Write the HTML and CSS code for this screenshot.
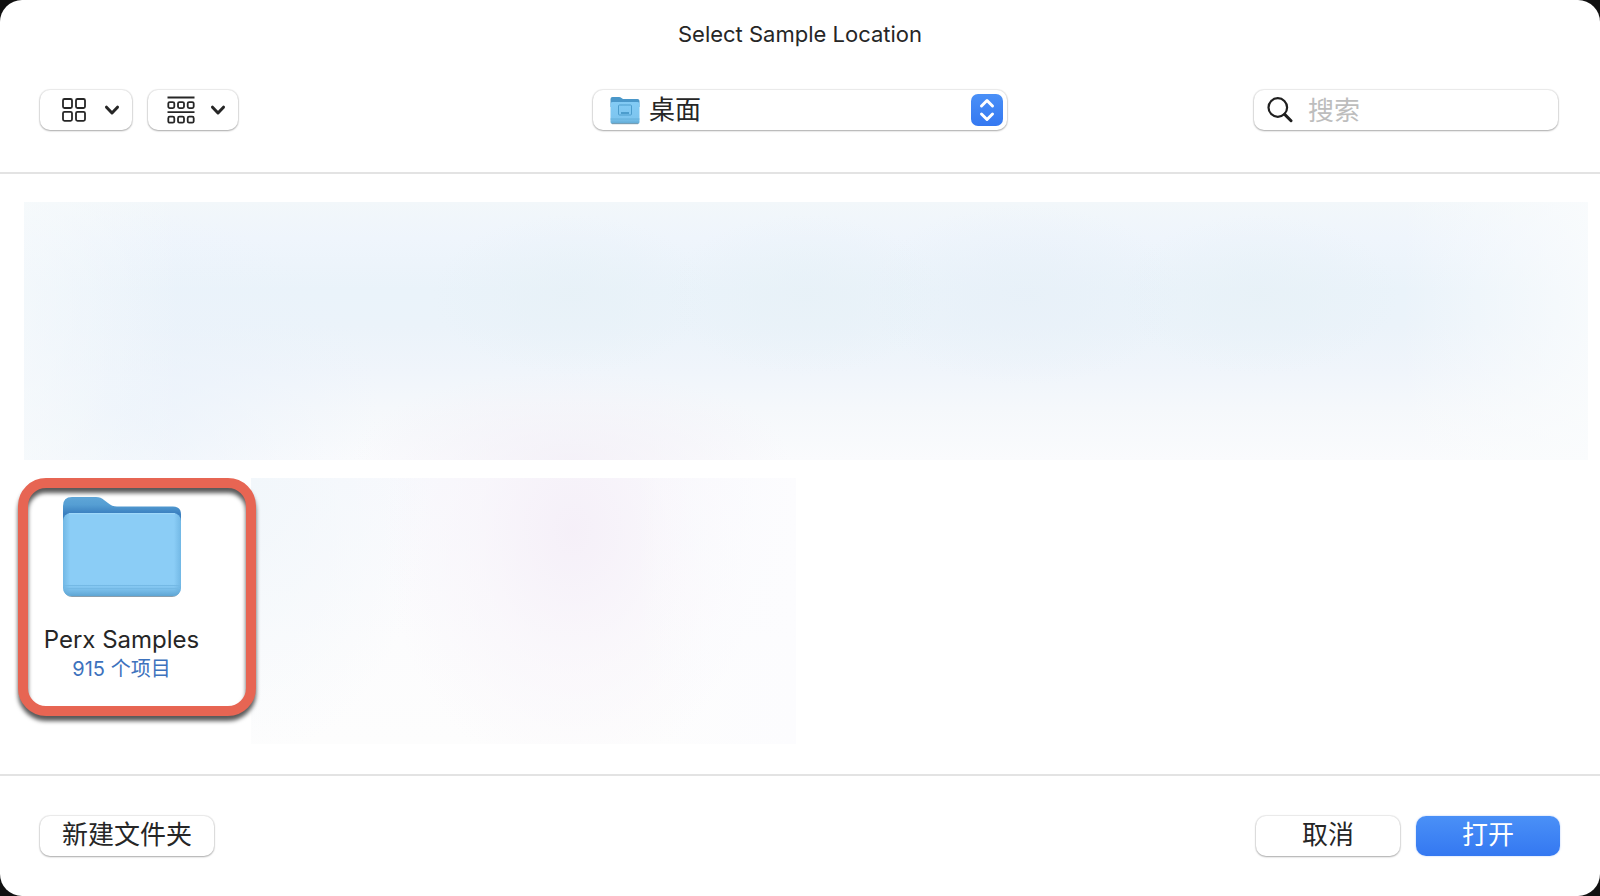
FILE: index.html
```html
<!DOCTYPE html>
<html lang="zh-CN">
<head>
<meta charset="utf-8">
<meta name="viewport" content="width=device-width, initial-scale=1">
<title>Select Sample Location</title>
<link rel="stylesheet" href="styles.css">
</head>
<body>
<div class="dialog" role="dialog" aria-labelledby="dialog-title">
  <header class="header">
    <h1 class="title" id="dialog-title">Select Sample Location</h1>
    <div class="toolbar">
      <div class="view-controls">
        <button class="control view-button" type="button" aria-label="图标显示" aria-haspopup="menu">
          <svg width="26" height="26" viewBox="0 0 26 26" fill="none" stroke="#262626" stroke-width="1.8" aria-hidden="true">
            <rect x="2" y="2" width="9" height="9" rx="1.5"/><rect x="15" y="2" width="9" height="9" rx="1.5"/>
            <rect x="2" y="14.8" width="9" height="9" rx="1.5"/><rect x="15" y="14.8" width="9" height="9" rx="1.5"/>
          </svg>
          <svg width="16" height="12" viewBox="0 0 16 12" fill="none" stroke="#262626" stroke-width="3" stroke-linecap="round" stroke-linejoin="round" aria-hidden="true"><path d="M2.500 3.200 8 9l5.500-5.800"/></svg>
        </button>
        <button class="control view-button group-button" type="button" aria-label="分组方式" aria-haspopup="menu">
          <svg width="28" height="28" viewBox="0 0 28 28" fill="none" stroke="#262626" stroke-width="1.8" aria-hidden="true">
            <path d="M.5 1.500h27M.5 16.200h27"/>
            <rect x="1.300" y="6.100" width="6" height="6" rx="1.500"/><rect x="11" y="6.100" width="6" height="6" rx="1.500"/><rect x="20.700" y="6.100" width="6" height="6" rx="1.500"/>
            <rect x="1.300" y="20.700" width="6" height="6" rx="1.500"/><rect x="11" y="20.700" width="6" height="6" rx="1.500"/><rect x="20.700" y="20.700" width="6" height="6" rx="1.500"/>
          </svg>
          <svg width="16" height="12" viewBox="0 0 16 12" fill="none" stroke="#262626" stroke-width="3" stroke-linecap="round" stroke-linejoin="round" aria-hidden="true"><path d="M2.500 3.200 8 9l5.500-5.800"/></svg>
        </button>
      </div>

      <div class="location">
        <select class="control location-select" aria-label="位置"><option>桌面</option></select>
        <svg class="location-folder" width="30" height="30" viewBox="0 0 30 30" aria-hidden="true">
          <defs><linearGradient id="small-front" x2="0" y2="1"><stop stop-color="#83cbf5"/><stop offset=".75" stop-color="#7dc5ef"/><stop offset="1" stop-color="#5ea7d2"/></linearGradient></defs>
          <path d="M.5 4Q.5 2 2.500 2H9q1.500 0 2.500 1l1.500 1H27.500q2 0 2 2V12H.5Z" fill="#4a97c9"/>
          <rect x=".5" y="7" width="29" height="22" rx="2" fill="url(#small-front)"/>
          <path d="M.5 24h29" stroke="#64afd9"/>
          <path d="M2 28.700h26" stroke="#7a9caf"/>
          <rect x="8.500" y="10" width="13" height="10" rx="1" fill="none" stroke="#4c9dcd"/>
          <path d="M11 18h8" stroke="#4c9dcd" stroke-width="2"/>
        </svg>
        <span class="stepper" aria-hidden="true">
          <svg width="32" height="32" viewBox="0 0 32 32" fill="none" stroke="#fff" stroke-width="3" stroke-linecap="round" stroke-linejoin="round"><path d="m10.500 12 5.500-5.500 5.500 5.500M10.500 20l5.500 5.500 5.500-5.500"/></svg>
        </span>
      </div>

      <label class="control search">
        <svg width="26" height="26" viewBox="0 0 26 26" fill="none" stroke="#1f1f1f" stroke-width="2.2" stroke-linecap="round" aria-hidden="true"><circle cx="10.800" cy="10.500" r="9.300"/><path d="m17.700 17.400 6.300 6.300" stroke-width="3"/></svg>
        <input class="search-input" type="search" placeholder="搜索" aria-label="搜索">
      </label>
    </div>
  </header>

  <main class="files">
    <div class="haze haze-top"></div>
    <div class="file-row">
      <div class="file">
        <svg class="folder" width="118" height="102" viewBox="0 0 118 102" aria-hidden="true">
          <defs>
            <linearGradient id="folder-back" x2="0" y2="1"><stop stop-color="#5fa6d7"/><stop offset=".2" stop-color="#559ed3"/><stop offset=".42" stop-color="#3b80c0"/></linearGradient>
            <linearGradient id="folder-side"><stop stop-color="#72b8e5"/><stop offset=".06" stop-color="#8bcdf6"/><stop offset=".94" stop-color="#8bcdf6"/><stop offset="1" stop-color="#72b8e5"/></linearGradient>
            <linearGradient id="folder-base" x2="0" y2="1"><stop offset=".86" stop-color="#69afdf" stop-opacity="0"/><stop offset="1" stop-color="#5ea5d3"/></linearGradient>
          </defs>
          <rect x="1" y="20" width="116" height="81" rx="8" fill="#8b9eac"/>
          <path d="M0 10Q0 1 9 1H33q5 0 8 3l4 3q4 3.500 9 3.500H110q8 0 8 8V40H0Z" fill="url(#folder-back)"/>
          <rect y="17" width="118" height="83" rx="8" fill="url(#folder-side)"/>
          <rect y="17" width="118" height="83" rx="8" fill="url(#folder-base)"/>
          <path d="M6 17.700h106" stroke="#a4dafa"/>
          <path d="M1 89.500h116M1 92.500h116" stroke="#74b9e5"/>
        </svg>
        <span class="file-name">Perx Samples</span>
        <span class="file-count">915 个项目</span>
        <span class="highlight"></span>
      </div>
      <div class="haze haze-bottom"></div>
    </div>
  </main>

  <footer class="footer">
    <button class="control action new-folder" type="button">新建文件夹</button>
    <div class="confirm">
      <button class="control action" type="button">取消</button>
      <button class="control action primary" type="button">打开</button>
    </div>
  </footer>
</div>
</body>
</html>
```
FILE: styles.css
```css
* { box-sizing: border-box; }

body {
  margin: 0;
  background: #111;
  color: #262626;
  font-family: Inter, "Noto Sans CJK SC", sans-serif;
}

.dialog {
  display: flex;
  flex-direction: column;
  min-height: 100vh;
  background: #fff;
  border-radius: 22px;
}

button, input, select { font: inherit; color: inherit; }

svg { display: block; flex: none; }

.header {
  padding: 20px 40px 42px;
  border-bottom: 2px solid #e3e3e3;
}

.title {
  margin: 0 0 42px;
  font-size: 22px;
  font-weight: 400;
  line-height: 28px;
  text-align: center;
}

.toolbar {
  display: grid;
  grid-template-columns: 1fr minmax(200px, 414px) 1fr;
  align-items: center;
}

.control {
  height: 40px;
  background: #fff;
  border: 0;
  border-radius: 10px;
  box-shadow: 0 0 1px 1px rgba(0, 0, 0, 0.08), 0 1px 2px rgba(0, 0, 0, 0.28);
}

.view-controls { display: flex; gap: 16px; }

.view-button {
  display: flex;
  align-items: center;
  gap: 17px;
  padding: 0 12px 0 21px;
}

.group-button { gap: 15px; padding: 0 12px 0 19px; }

.location { display: grid; align-items: center; }

.location > * { grid-area: 1 / 1; }

.location-select {
  width: 100%;
  padding: 0 44px 2px 56px;
  appearance: none;
  font-size: 26px;
}

.location-folder { margin-left: 17px; pointer-events: none; }

.stepper {
  justify-self: end;
  margin-right: 4px;
  border-radius: 7px;
  background: linear-gradient(#4a90f7, #3478f1);
  pointer-events: none;
}

.search {
  display: flex;
  justify-self: end;
  align-items: center;
  gap: 15px;
  width: 304px;
  max-width: 90%;
  margin-right: 2px;
  padding: 0 13px;
}

.search-input {
  flex: 1;
  min-width: 0;
  height: 40px;
  padding: 0;
  border: 0;
  outline: 0;
  background: none;
  font-size: 26px;
}

.search-input::placeholder { color: #bdbdbd; }

.files {
  display: flex;
  flex: 1;
  flex-direction: column;
  gap: 18px;
  padding: 28px 12px 30px 24px;
}

.haze-top {
  flex: 1;
  min-height: 258px;
  background:
    linear-gradient(90deg, rgba(248, 251, 252, 0.6), rgba(248, 251, 252, 0) 10%, rgba(250, 252, 253, 0) 88%, rgba(250, 252, 253, 0.8)),
    radial-gradient(ellipse 220px 90px at 35% 100%, rgba(243, 239, 247, 0.8), rgba(243, 239, 247, 0)),
    radial-gradient(ellipse 260px 200px at 6% 80%, rgba(234, 242, 251, 0.8), rgba(234, 242, 251, 0)),
    radial-gradient(ellipse 140px 80px at 35% 36%, rgba(231, 241, 247, 0.8), rgba(231, 241, 247, 0)),
    radial-gradient(ellipse 140px 80px at 50% 36%, rgba(231, 241, 247, 0.8), rgba(231, 241, 247, 0)),
    radial-gradient(ellipse 160px 90px at 64% 36%, rgba(231, 240, 248, 0.8), rgba(231, 240, 248, 0)),
    radial-gradient(ellipse 140px 80px at 79% 36%, rgba(231, 241, 247, 0.8), rgba(231, 241, 247, 0)),
    linear-gradient(#f2f7fa, #eff5fc 14%, #eaf3fa 34%, #ebf3fa 48%, #f0f5fb 66%, #f5f8fb 80%, #fafbfd);
}

.file-row {
  display: grid;
  grid-template-columns: 227px minmax(0, 545px);
  min-height: 266px;
}

.file {
  position: relative;
  display: flex;
  flex-direction: column;
  align-items: center;
  height: 238px;
  padding: 18px 32px 0 0;
  text-align: center;
}

.folder { margin-bottom: 27px; }

.file-name { font-size: 24px; line-height: 30px; }

.file-count { color: #3d72bd; font-size: 20px; line-height: 28px; }

/* The ring lies over the file cell and the edge of its neighbour. */
.highlight {
  position: absolute;
  z-index: 1;
  inset: 0 -5px 0 -6px;
  border: 10px solid #e76553;
  border-radius: 28px;
  filter: drop-shadow(0 5px 2px rgba(0, 0, 0, 0.65));
}

.haze-bottom {
  background:
    linear-gradient(90deg, rgba(252, 252, 254, 0) 70%, #fcfcfe),
    radial-gradient(ellipse 190px 250px at 59% 20%, rgba(245, 239, 248, 0.95), rgba(248, 244, 250, 0.6) 50%, rgba(252, 252, 253, 0)),
    radial-gradient(ellipse 180px 280px at 0 0, #f2f7fb, rgba(251, 252, 253, 0)),
    linear-gradient(#f8f9fd, #fcfcfd 60%, #fdfdfd);
}

.footer {
  display: flex;
  align-items: center;
  justify-content: space-between;
  padding: 40px;
  border-top: 2px solid #e3e3e3;
}

.confirm { display: flex; gap: 16px; }

.action {
  min-width: 144px;
  padding: 0 20px 2px;
  font-size: 26px;
  line-height: 38px;
}

.new-folder { min-width: 174px; }

.primary {
  background: linear-gradient(#4a90f7, #3478f1);
  box-shadow: 0 0 2px rgba(52, 120, 241, 0.4);
  color: #fff;
}
```
